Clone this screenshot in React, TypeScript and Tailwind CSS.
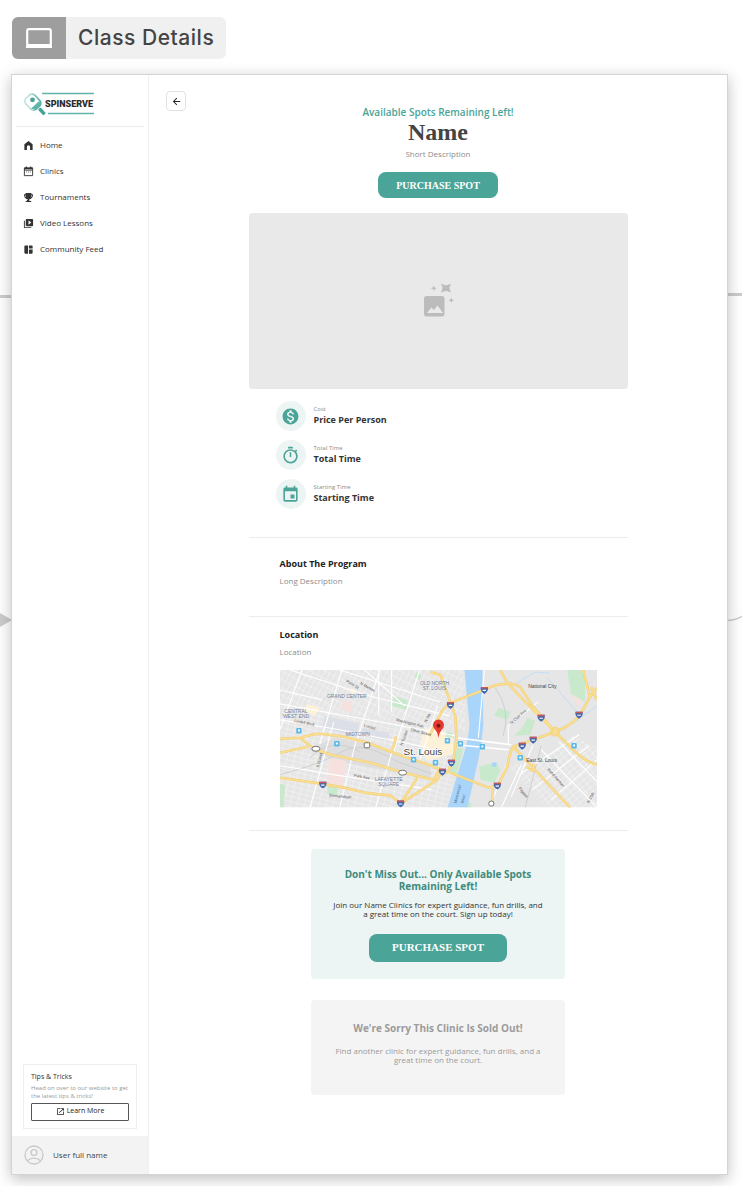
import type { ReactNode } from "react";
import {
  MdArrowBack,
  MdEvent,
  MdMonetizationOn,
  MdOpenInNew,
  MdOutlineTimer,
  MdSpaceDashboard,
  MdVideoLibrary,
} from "react-icons/md";
import { IoMdTrophy } from "react-icons/io";

function LaptopIcon() {
  return (
    <svg viewBox="0 0 26 20" className="h-5 w-[26px]" fill="none" aria-hidden="true">
      <rect x="1.2" y="1.2" width="23.6" height="16" rx="1.8" stroke="#fff" strokeWidth="2.2" />
      <path d="M0 17h26v3H0z" fill="#fff" />
    </svg>
  );
}

function HomeIcon() {
  return (
    <svg viewBox="0 0 24 24" className="size-[11px]" fill="currentColor" aria-hidden="true">
      <path d="M12 2 3 9.5V22h5.500v-7a3.500 3.500 0 0 1 7 0v7H21V9.5z" />
    </svg>
  );
}

function CalendarIcon() {
  return (
    <svg viewBox="0 0 24 24" className="size-[11px]" fill="none" aria-hidden="true">
      <path d="M3 4h18v17H3zM3 9h18" stroke="currentColor" strokeWidth="2" strokeLinejoin="round" />
      <path d="M3 4h18v3H3zM6 1h2.5v4H6zM15.500 1H18v4h-2.500z" fill="currentColor" />
      <path d="M7 13h10" stroke="currentColor" strokeWidth="1.600" strokeDasharray="2 2" />
    </svg>
  );
}

function UserIcon() {
  return (
    <svg viewBox="0 0 20 20" className="size-5" fill="none" stroke="#c9c9c9" strokeWidth="1.3" aria-hidden="true">
      <circle cx="10" cy="10" r="9" />
      <circle cx="10" cy="7.500" r="2.900" />
      <path d="M3.500 15.800c1.700-1.800 4-2.600 6.500-2.600s4.800.8 6.500 2.600" />
    </svg>
  );
}

function Logo() {
  return (
    <svg viewBox="0 0 72 26" className="h-[26px] w-[72px]" role="img" aria-label="Spinserve">
      <defs>
        <linearGradient id="paddle" x1="0" y1="0" x2="1" y2="1">
          <stop offset="0.3" stopColor="#bfe2dd" />
          <stop offset="1" stopColor="#43a394" />
        </linearGradient>
      </defs>
      <g transform="rotate(-43 9 10)">
        <rect x="2.500" y="2.500" width="12.500" height="15" rx="4" fill="#fff" stroke="url(#paddle)" strokeWidth="1.600" />
        <path d="M3 13.500h11.500l-2.500 4.500H6z" fill="#5fb5a9" />
        <rect x="7.400" y="19" width="3.400" height="8" rx="1" fill="#43a394" />
      </g>
      <circle cx="8.500" cy="7.800" r="2.400" fill="#43a394" />
      <path d="M18 1.500h52M24 21.500h46" stroke="#5fb5a9" strokeWidth="1.400" />
      <text x="21" y="15" fontFamily="Roboto, sans-serif" fontSize="9" fontWeight="900" fill="#2b2b2b">
        SPINSERVE
      </text>
    </svg>
  );
}

function ImagePlaceholderIcon() {
  return (
    <svg viewBox="0 0 32 36" className="h-9 w-8" fill="#bcbcbc" aria-hidden="true">
      <rect x="2" y="13" width="20.500" height="20.500" rx="2.500" />
      <path d="M5 30l4.500-5.500 2.500 2.500 3.500-4.500L21 30z" fill="#e9e9e9" />
      <path d="M19 .8l5 1.700 5-1.700-1.700 4.200L29 9.500l-5-1.700-5 1.700L20.700 5z" />
      <path d="M11.800 2.500l.9 2.100 2.100.7-2.100.7-.9 2.100-.8-2.100-2.300-.7 2.300-.7zM29.300 14.500l.9 2.100 1.800.7-1.800.7-.9 2.100-.8-2.100-2.300-.7 2.300-.7z" />
    </svg>
  );
}

const streets = [
  "M0 50L60 60 150 78M0 34L110 54 176 66M10 0L90 26 170 46M60 0l100 32M0 20l42 10M0 96l60 10 92 14M60 138l16-66M30 138L54 52M96 138l16-55M0 60L22 0M40 74L62 0M78 68L100 0M114 82L140 0M140 92l18-56M85 0l40 36M99 0v45M112 0v42",
  "M229 75V56l30-24M205 0l-6 68M233 80l-22 56M242 95l-20 43M262 80l56 58M280 72l38 40M300 65l-60 40M310 76l-57 44M318 90l-46 40M254 75l-22 52",
];

const highways = [
  "M0 69L21 68Q33 64 41 64L64 67 88 73 114 83 134 90 158 98",
  "M0 83L28 77M21 69L34 79 51 85 91 93 124 103 154 110 161 98",
  "M0 108L41 114 64 118 84 123 111 126 121 134 138 123 158 110 163 100",
  "M121 134L138 108M116 67Q116 74 111 82",
  "M151 2L161 5 169 27 176 47 177 70 174 90 168 103 154 97M171 33L163 40 150 66",
  "M171 33L204 20Q228 9 241 17L254 37 276 62 294 80Q306 92 318 95",
  "M221 0L228 13 244 30 261 47 276 62",
  "M276 62Q297 54 304 40L311 27 318 18M304 0L311 27M312 17l6 13",
  "M276 62L254 70 234 77Q230 84 228 97L219 115 209 118 171 103M213 117V135",
  "M234 77L251 95 291 138M247 97l6 4 2-7",
];

const shields = [
  [43, 115],
  [121, 134],
  [171, 35],
  [205, 20],
  [262, 48],
  [300, 45],
  [254, 70],
  [243, 76],
  [172, 93],
  [163, 102],
  [218, 116],
];

const stations = [
  [19, 61],
  [57, 74],
  [134, 90],
  [156, 93],
  [168, 71],
  [181, 74],
  [203, 77],
  [241, 88],
  [295, 76],
];

const roadNames: [number, number, number, string][] = [
  [66, 12, 32, "Palm St"],
  [80, 14, 30, "N Market"],
  [14, 52, 12, "Lindell Blvd"],
  [116, 51, 14, "Washington Ave"],
  [131, 61, 15, "Olive Street"],
  [84, 57, 14, "Locust"],
  [39, 98, -76, "S Grand"],
  [74, 107, 10, "Park Ave"],
  [49, 127, 5, "Shenandoah"],
  [123, 76, -70, "N Tucker"],
  [147, 53, -62, "N 7th"],
  [232, 55, -42, "St Clair Ave"],
  [268, 100, 48, "Bond Avenue"],
  [239, 119, 50, "Piggott"],
  [310, 134, -62, "N 15th"],
];

function LocationMap() {
  return (
    <svg viewBox="0 0 318 138" className="block w-full" role="img" aria-label="Map of St. Louis">
      <defs>
        <pattern id="blocks-west" width="7" height="5" patternUnits="userSpaceOnUse" patternTransform="rotate(14)">
          <path d="M0 0h7M0 0v5" stroke="#f8f8f8" strokeWidth=".9" />
        </pattern>
        <pattern id="blocks-north" width="5" height="7" patternUnits="userSpaceOnUse" patternTransform="rotate(28)">
          <path d="M0 0h5M0 0v7" stroke="#f8f8f8" strokeWidth=".9" />
        </pattern>
        <pattern id="blocks-east" width="6" height="5" patternUnits="userSpaceOnUse" patternTransform="rotate(-40)">
          <path d="M0 0h6M0 0v5" stroke="#f8f8f8" strokeWidth=".9" />
        </pattern>
        <clipPath id="map-edge">
          <path d="M0 0h318v138H0z" />
        </clipPath>
      </defs>
      <g clipPath="url(#map-edge)">
        <path d="M0 0h318v138H0z" fill="#e6e6e6" />
        <path d="M0 36L176 60 172 138H0z" fill="url(#blocks-west)" />
        <path d="M0 0h186v60L0 36z" fill="url(#blocks-north)" />
        <path d="M262 90l32-24 24 12v60h-50L230 96z" fill="url(#blocks-east)" />
        <g fill="#dcdfe7">
          <path d="M45 46l35 8-3 13-35-9zM83 58l27 5-2 8-27-6z" />
        </g>
        <path d="M55 68l36 7 60 22v12L60 92 28 80z" fill="#dedede" />
        <g fill="#f7e1df">
          <path d="M49 88l17 3-3 26-15-4zM63 30l10 3-2 10-9-4zM292 23l16 2-9 12z" />
        </g>
        <g fill="#fdf2d7">
          <path d="M27 34l13 4-5 8-11-5zM146 58l27 6 1 20-27 7-6-18zM72 18l5 3-3 4-4-3z" />
        </g>
        <g fill="#c9e9cd">
          <path d="M114 26l14 4-1 10-15-4zM288 0h18v32l-14-8zM219 38l12 4-3 8-13-4zM248 48l8 3-5 14-16 1 9-9zM200 97l17-5 4 9-6 12-14-3zM48 116l10 2-1 8-10-2zM0 114l5 1-1 23H0zM178 78l6 1-7 26-8-3zM137 2l5 3-2 5-5-3zM167 62l6 1v5l-7-1zM187 132l5 2v4h-6z" />
        </g>
        <path
          d="M0 105Q42 94 62 82T118 92L152 104M30 88Q52 66 80 82M216 18Q232 40 224 66M262 76L246 138"
          fill="none"
          stroke="#cfcfcf"
          strokeWidth="1"
        />
        <path d="M185 0H203L204 54Q203 72 199 90L188 138H168L181 95Q190 68 190 54z" fill="#a9d5fb" />
        <circle cx="215" cy="95" r="2.500" fill="#a9d5fb" />
        <path d="M236 14l20-12 14 1M268 8l30 34M294 53l24-17" fill="none" stroke="#b8dafa" strokeWidth=".8" />
        {streets.map((d) => (
          <path key={d} d={d} fill="none" stroke="#fff" strokeWidth="1.100" />
        ))}
        <path d="M177 68L232 75M177 75L229 80" fill="none" stroke="#fff" strokeWidth="1.600" />
        {highways.map((d) => (
          <path key={d} d={d} fill="none" stroke="#f2ce73" strokeWidth="2.600" strokeLinejoin="round" />
        ))}
        {highways.map((d) => (
          <path key={d} d={d} fill="none" stroke="#fbdf92" strokeWidth="1.500" strokeLinejoin="round" />
        ))}
        <circle cx="276" cy="62" r="4" fill="none" stroke="#f6d67f" strokeWidth="2" />
        {stations.map(([x, y]) => (
          <g key={`${x}-${y}`} transform={`translate(${x} ${y})`}>
            <rect x="-2.700" y="-2.700" width="5.400" height="5.400" rx="1" fill="#58b9ea" />
            <path d="M-1-1.200h2v2h-2z" fill="#fff" />
          </g>
        ))}
        {shields.map(([x, y]) => (
          <g key={`${x}-${y}`} transform={`translate(${x} ${y})`}>
            <path d="M-3.500-3H3.500Q4.500 1.500 0 4-4.500 1.500-3.500-3z" fill="#4569ad" />
            <path d="M-3.500-3H3.500v1.500h-7z" fill="#c9565b" />
            <path d="M-1.700.4h3.400" stroke="#fff" strokeWidth="1.200" />
          </g>
        ))}
        <g fill="#fff" stroke="#555" strokeWidth=".8">
          <ellipse cx="36" cy="79" rx="4" ry="2.500" />
          <ellipse cx="123" cy="103" rx="4" ry="2.500" />
          <rect x="84.500" y="73" width="5.500" height="5" rx="1" />
          <circle cx="212" cy="134" r="2.600" />
        </g>
        <g fontFamily="'Liberation Sans', sans-serif" fontSize="4" fill="#555">
          {roadNames.map(([x, y, angle, name]) => (
            <text key={name} transform={`translate(${x} ${y}) rotate(${angle})`}>
              {name}
            </text>
          ))}
        </g>
        <g fontFamily="'Liberation Sans', sans-serif" fontSize="5" fill="#73809a" textAnchor="middle">
          <text x="67" y="28">GRAND CENTER</text>
          <text x="78" y="66">MIDTOWN</text>
          <text x="155" y="15">OLD NORTH</text>
          <text x="155" y="20">ST. LOUIS</text>
          <text x="16" y="43">CENTRAL</text>
          <text x="16" y="48">WEST END</text>
          <text x="109" y="111">LAFAYETTE</text>
          <text x="109" y="116">SQUARE</text>
        </g>
        <g fontFamily="'Liberation Sans', sans-serif" fill="#444">
          <text x="249" y="18" fontSize="5">National City</text>
          <text x="247" y="92" fontSize="5">East St. Louis</text>
          <text x="124" y="85" fontSize="10" stroke="#fff" strokeWidth="1.500" paintOrder="stroke">
            St. Louis
          </text>
        </g>
        <g fontFamily="'Liberation Sans', sans-serif" fontSize="4" fill="#4c6c8c">
          <text transform="translate(177 134) rotate(-76)">Mississippi</text>
          <text transform="translate(184 134) rotate(-76)">River</text>
        </g>
        <path d="M159 68Q158.500 63 155.500 59.500A5.500 5.500 0 1 1 162.500 59.500Q159.500 63 159 68z" fill="#e3392e" />
        <circle cx="159" cy="56" r="2" fill="#7d1712" />
      </g>
    </svg>
  );
}

const navItems: { label: string; icon: ReactNode }[] = [
  { label: "Home", icon: <HomeIcon /> },
  { label: "Clinics", icon: <CalendarIcon /> },
  { label: "Tournaments", icon: <IoMdTrophy className="size-[11px]" /> },
  { label: "Video Lessons", icon: <MdVideoLibrary className="size-[11px]" /> },
  { label: "Community Feed", icon: <MdSpaceDashboard className="size-[11px]" /> },
];

const facts: { label: string; value: string; icon: ReactNode }[] = [
  { label: "Cost", value: "Price Per Person", icon: <MdMonetizationOn className="size-[19px]" /> },
  { label: "Total Time", value: "Total Time", icon: <MdOutlineTimer className="size-[19px]" /> },
  { label: "Starting Time", value: "Starting Time", icon: <MdEvent className="size-[19px]" /> },
];

function Sidebar() {
  return (
    <aside className="flex w-[137px] shrink-0 flex-col border-r border-[#f0f0f0]">
      <div className="mx-1 border-b border-[#ececec] px-2 pt-[17px] pb-2">
        <Logo />
      </div>
      <nav className="flex flex-col gap-[10px] px-[11px] pt-[10px]">
        {navItems.map((item) => (
          <a key={item.label} href="#" className="flex h-4 items-center gap-[6px] text-[8px] font-medium text-[#333]">
            {item.icon}
            {item.label}
          </a>
        ))}
      </nav>
      <div className="mx-[11px] mt-auto mb-[7px] border border-[#eee] p-[7px]">
        <h2 className="text-[7px] leading-[10px] font-medium text-[#333]">Tips &amp; Tricks</h2>
        <p className="mt-[2px] text-[6px] leading-[8px] text-[#999]">
          Head on over to our website to get the latest tips &amp; tricks!
        </p>
        <button className="mt-[3px] flex h-[18px] w-full items-center justify-center gap-[2px] rounded-[1px] border border-[#555] text-[7px] font-medium text-[#222]">
          <MdOpenInNew className="size-[9px]" />
          Learn More
        </button>
      </div>
      <div className="flex h-[38px] items-center gap-[9px] bg-[#f3f3f3] px-3 text-[8px] text-[#444]">
        <UserIcon />
        User full name
      </div>
    </aside>
  );
}

function PurchaseButton({ className }: { className: string }) {
  return (
    <button className={`rounded-lg bg-[#4aa497] font-['Liberation_Serif',serif] font-bold text-white ${className}`}>
      PURCHASE SPOT
    </button>
  );
}

function ClassDetails() {
  return (
    <div className="flex flex-col">
      <header className="flex flex-col items-center pt-[31px] text-center">
        <p className="text-[10px] leading-3 font-semibold text-[#4aa497]">Available Spots Remaining Left!</p>
        <h1 className="font-['Liberation_Serif',serif] text-2xl leading-7 font-bold text-[#444]">Name</h1>
        <p className="text-[8px] leading-4 text-[#8c8c8c]">Short Description</p>
        <PurchaseButton className="mt-[10px] h-[26px] w-[120px] text-[10px]" />
      </header>

      <div className="mt-[15px] flex h-44 items-center justify-center rounded-[4px] bg-[#e9e9e9]">
        <ImagePlaceholderIcon />
      </div>

      <dl className="mt-3 flex flex-col gap-[9px] px-[27px]">
        {facts.map((fact) => (
          <div key={fact.label} className="flex h-[30px] items-center gap-2">
            <span className="flex size-[30px] items-center justify-center rounded-full bg-[#ecf5f4] text-[#4aa497]">
              {fact.icon}
            </span>
            <div>
              <dt className="text-[6px] leading-[8px] text-[#8c8c8c]">{fact.label}</dt>
              <dd className="text-[9px] leading-[14px] font-bold text-[#333]">{fact.value}</dd>
            </div>
          </div>
        ))}
      </dl>

      <section className="mt-7 border-t border-[#ececec] px-[31px] pt-[19px] pb-[27px]">
        <h2 className="text-[9px] leading-[14px] font-bold text-[#222]">About The Program</h2>
        <p className="mt-[2px] text-[8px] leading-4 text-[#8c8c8c]">Long Description</p>
      </section>

      <section className="border-y border-[#ececec] px-[31px] pt-[11px] pb-[22px]">
        <h2 className="text-[9px] leading-[14px] font-bold text-[#222]">Location</h2>
        <p className="mt-[2px] mb-[10px] text-[8px] leading-4 text-[#8c8c8c]">Location</p>
        <LocationMap />
      </section>

      <section className="mx-auto mt-[18px] flex w-[254px] flex-col items-center rounded-[4px] bg-[#ecf5f4] px-5 pt-[19px] pb-[17px] text-center">
        <h2 className="text-[10px] leading-3 font-bold text-[#3f8b7c]">
          Don't Miss Out... Only Available Spots Remaining Left!
        </h2>
        <p className="mt-2 text-[8px] leading-[9px] text-[#333]">
          Join our Name Clinics for expert guidance, fun drills, and a great time on the court. Sign up today!
        </p>
        <PurchaseButton className="mt-[16px] h-7 w-[138px] text-[11px]" />
      </section>

      <section className="mx-auto mt-[21px] w-[254px] rounded-[4px] bg-[#f4f4f4] px-5 pt-[22px] pb-[31px] text-center text-[#9b9b9b]">
        <h2 className="text-[10px] leading-3 font-bold">We're Sorry This Clinic Is Sold Out!</h2>
        <p className="mt-3 text-[8px] leading-[9px]">
          Find another clinic for expert guidance, fun drills, and a great time on the court.
        </p>
      </section>
    </div>
  );
}

export default function App() {
  return (
    <div className="relative min-h-screen overflow-hidden bg-white pt-[17px] pr-[14px] pb-[11px] pl-[11px] font-['Open_Sans',sans-serif]">
      {/* flow connectors running behind the screen */}
      <div className="absolute top-[295px] left-0 h-[3px] w-4 bg-[#ccc]" />
      <div className="absolute top-[293px] right-0 h-[3px] w-5 bg-[#ccc]" />
      <svg viewBox="0 0 12 14" className="absolute top-[613px] left-0 h-[14px] w-3" aria-hidden="true">
        <path d="M0 0l12 7-12 7z" fill="#ccc" />
      </svg>
      <svg viewBox="0 0 16 8" className="absolute top-[614px] right-0 h-2 w-4" aria-hidden="true">
        <path d="M0 6.500q9 0 16-4" fill="none" stroke="#ccc" strokeWidth="1.500" />
      </svg>

      <div className="ml-px flex h-[42px] w-fit overflow-hidden rounded-md bg-[#f0f0f0]">
        <div className="flex w-[54px] items-center justify-center bg-[#9e9e9e]">
          <LaptopIcon />
        </div>
        <div className="flex items-center px-3 font-['Inter',sans-serif] text-[21px] font-medium tracking-wide text-[#444]">
          Class Details
        </div>
      </div>

      <div className="relative mt-[15px] flex border border-[#d4d4d4] bg-white shadow-[0_4px_14px_rgba(0,0,0,0.25)]">
        <Sidebar />
        <main className="grid min-w-0 flex-1 grid-cols-[1fr_minmax(0,379px)_1fr] pb-[79px]">
          <div className="pt-4 pl-[17px]">
            <button
              aria-label="Back"
              className="flex size-5 items-center justify-center rounded-[4px] border border-[#e2e2e2] text-[#222]"
            >
              <MdArrowBack className="size-[11px]" />
            </button>
          </div>
          <ClassDetails />
        </main>
      </div>
    </div>
  );
}
